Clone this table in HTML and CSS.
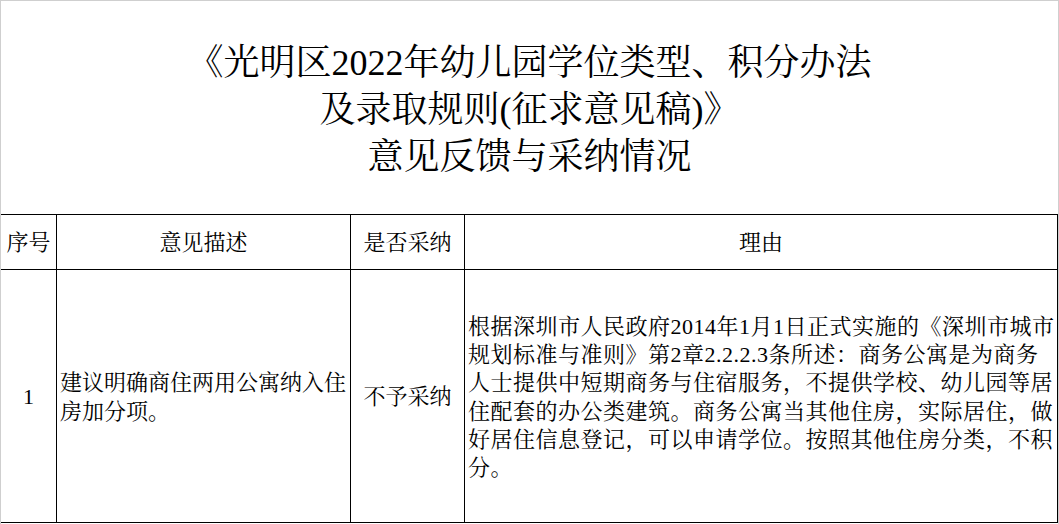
FILE: index.html
```html
<!DOCTYPE html>
<html lang="zh-CN">
<head>
<meta charset="utf-8">
<title>意见反馈与采纳情况</title>
<link rel="stylesheet" href="styles.css">
</head>
<body>
<div class="sheet">
  <header class="title">
    <h1 class="title-text">《光明区2022年幼儿园学位类型、积分办法<br>及录取规则(征求意见稿)》<br>意见反馈与采纳情况</h1>
  </header>
  <div class="grid">
    <div class="cell head">序号</div>
    <div class="cell head">意见描述</div>
    <div class="cell head">是否采纳</div>
    <div class="cell head">理由</div>
    <div class="cell center num">1</div>
    <div class="cell left">建议明确商住两用公寓纳入住<br>房加分项。</div>
    <div class="cell center">不予采纳</div>
    <div class="cell left reason">根据深圳市人民政府2014年1月1日正式实施的《深圳市城市<br>规划标准与准则》第2章2.2.2.3条所述：商务公寓是为商务<br>人士提供中短期商务与住宿服务，不提供学校、幼儿园等居<br>住配套的办公类建筑。商务公寓当其他住房，实际居住，做<br>好居住信息登记，可以申请学位。按照其他住房分类，不积<br>分。</div>
  </div>
</div>
</body>
</html>
```

FILE: styles.css
```css
html, body {
  margin: 0;
  padding: 0;
  background: #ffffff;
}

body {
  font-family: "Liberation Serif", "Noto Serif CJK SC", "Noto Sans CJK SC", serif;
  color: #000000;
}

.sheet {
  width: 1059px;
  height: 524px;
  box-sizing: border-box;
  border-top: 1px solid #cfcfcf;
  border-left: 1px solid #cfcfcf;
  border-right: 1px solid #cfcfcf;
  background: #ffffff;
}

.title {
  height: 213px;
  box-sizing: border-box;
  padding-top: 6px;
  display: flex;
  align-items: center;
  justify-content: center;
}

.title-text {
  margin: 0;
  font-weight: normal;
  font-size: 36px;
  line-height: 47px;
  text-align: center;
}

.grid {
  display: grid;
  grid-template-columns: 55px 293px 113px 592px;
  grid-template-rows: 54px 252px;
  gap: 1px;
  width: 1057px;
  box-sizing: border-box;
  background: #000000;
  border-top: 1px solid #000000;
  border-bottom: 1px solid #000000;
  border-right: 1px solid #000000;
}

.cell {
  background: #ffffff;
  box-sizing: border-box;
  padding-top: 3px;
  font-size: 22px;
  line-height: 28.3px;
  display: flex;
  align-items: center;
}

.head {
  justify-content: center;
}

.center {
  justify-content: center;
}

.left {
  justify-content: flex-start;
  padding-left: 3px;
  white-space: nowrap;
}

.reason {
  letter-spacing: 0.5px;
}
```
